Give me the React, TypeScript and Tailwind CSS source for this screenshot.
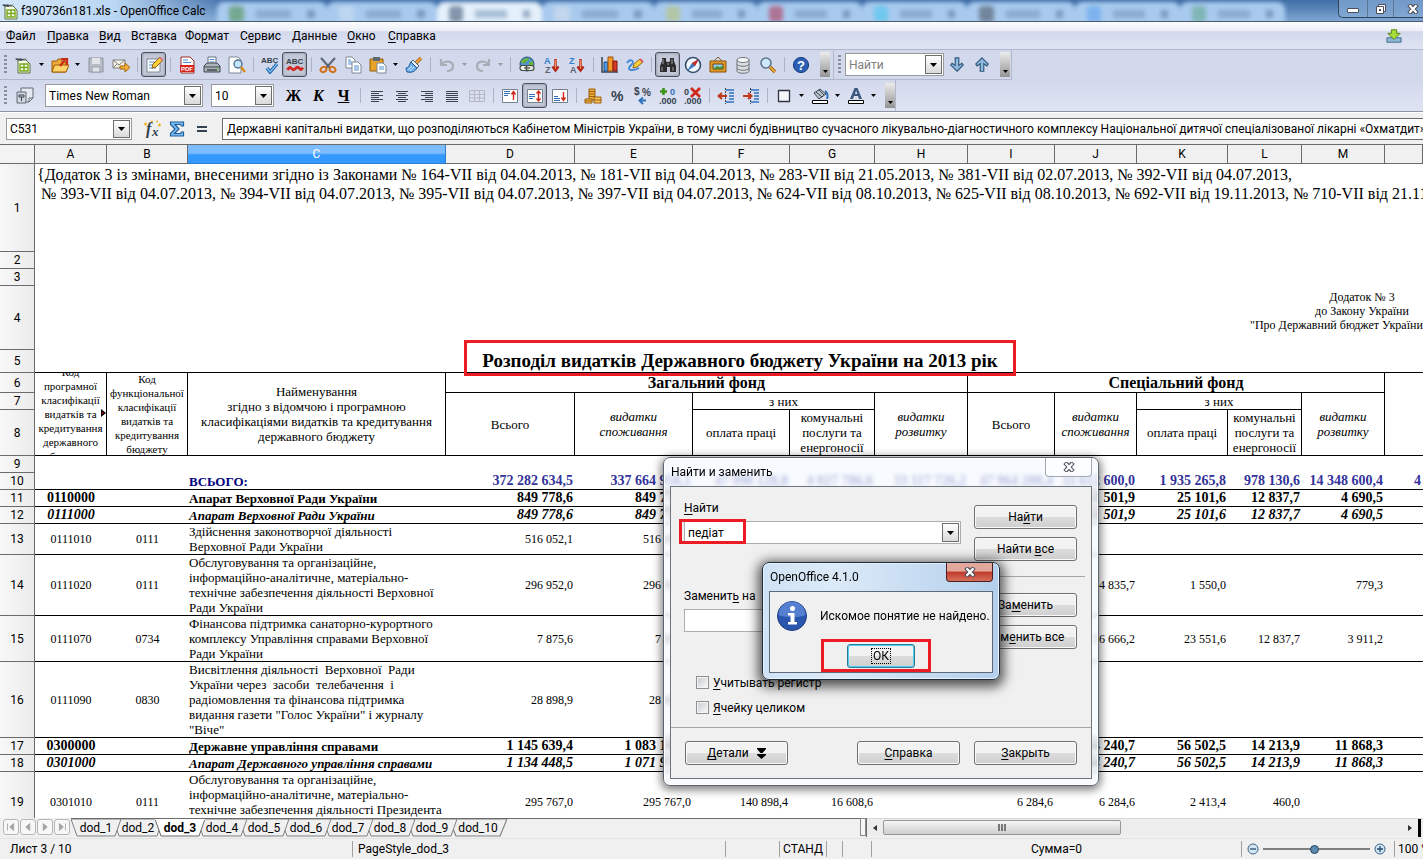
import React from "react";

/* ---------- small shared pieces ---------- */

function U({ t }: { t: string }) {
  const [a, b, c] = t.split("_");
  return (
    <span>
      {a}
      <span className="underline underline-offset-2">{b}</span>
      {c}
    </span>
  );
}

function Svg({ children, size = "h-[18px] w-[18px]" }: { children: React.ReactNode; size?: string }) {
  return (
    <svg viewBox="0 0 18 18" className={size + " shrink-0"} fill="none" aria-hidden="true">
      {children}
    </svg>
  );
}

function TB({ label, pressed, children }: { label: string; pressed?: boolean; children: React.ReactNode }) {
  return (
    <button
      aria-label={label}
      className={
        "flex h-[25px] w-[25px] shrink-0 items-center justify-center rounded-[3px] " +
        (pressed ? "border border-[#4d505c] bg-[#c3c8d8] shadow-[inset_0_0_2px_1px_#a3a7b6]" : "")
      }
    >
      {children}
    </button>
  );
}

function Drop({ label, dim }: { label: string; dim?: boolean }) {
  return (
    <button aria-label={label} className="flex h-[25px] w-[11px] shrink-0 items-center justify-center">
      <svg viewBox="0 0 5 3" className="h-[3px] w-[5px]" aria-hidden="true">
        <path d="M0 0h5L2.500 3z" fill={dim ? "#9a9a9a" : "#000"} />
      </svg>
    </button>
  );
}

function Sep() {
  return (
    <div className="flex w-2 shrink-0 justify-center">
      <div className="h-[15px] w-px bg-[#aeb3c4]" />
    </div>
  );
}

function Grip() {
  return <div className="ml-1 h-5 w-[3px] shrink-0 bg-[repeating-linear-gradient(to_bottom,#8b8f9c_0_2px,transparent_2px_4px)]" />;
}

function More() {
  return (
    <button
      aria-label="Ещё"
      className="flex h-[25px] w-[10px] shrink-0 items-end justify-center bg-gradient-to-b from-[#ececec] to-[#949494] pb-1"
    >
      <svg viewBox="0 0 5 3" className="h-[3px] w-[5px]" aria-hidden="true">
        <path d="M0 0h5L2.500 3z" fill="#000" />
      </svg>
    </button>
  );
}

function ArrowBox() {
  return (
    <span className="flex h-full w-[17px] shrink-0 items-center justify-center border border-[#6e6e6e] bg-gradient-to-b from-white to-[#d9d9d9]">
      <svg viewBox="0 0 7 4" className="h-1 w-[7px]" aria-hidden="true">
        <path d="M0 0h7L3.500 4z" fill="#000" />
      </svg>
    </span>
  );
}

function SelectBox({ label, value, width }: { label: string; value: string; width: string }) {
  return (
    <div className={"relative flex h-[23px] shrink-0 border border-[#9a9a9a] bg-white p-px " + width}>
      <select aria-label={label} defaultValue={value} className="w-full min-w-0 appearance-none bg-transparent pl-[2px] text-[12px] leading-4 outline-none">
        <option>{value}</option>
      </select>
      <div className="pointer-events-none absolute inset-y-px right-px flex">
        <ArrowBox />
      </div>
    </div>
  );
}

/* ---------- icons ---------- */

const DocCalc = () => (
  <Svg>
    <path d="M3 4h8l4 4v9H3z" fill="#fbfdf2" stroke="#57702f" />
    <path d="M5 8h8v7H5zM9 8v7M5 11.500h8" stroke="#76a818" strokeWidth="1.400" />
    <path d="M0 3c3-2 4 1 6-1 1 2 3 0 6 1-3 1-4 0-6 2-1-1-4 0-6-2z" fill="#3d4b57" />
  </Svg>
);
const IOpen = () => (
  <Svg>
    <path d="M1 5h5l1-2h4v3h4v10H1z" fill="#f0a93a" stroke="#9c5d09" />
    <path d="M3.500 9H18l-3 7H1z" fill="#ffd36b" stroke="#9c5d09" />
    <path d="M9 10l5-6M10 3h6v6" stroke="#c92b17" strokeWidth="2.200" />
  </Svg>
);
const ISave = () => (
  <Svg>
    <path d="M2 2h14v14H2z" fill="#b9bdc7" stroke="#8d919b" />
    <path d="M5 2h8v6H5z" fill="#e2e4ea" />
    <path d="M5 11h8v5H5z" fill="#e2e4ea" stroke="#9da1aa" />
  </Svg>
);
const IMail = () => (
  <Svg>
    <path d="M1 4h12v8H1z" fill="#f7f4ea" stroke="#7d7f7a" />
    <path d="M1 4l6 5 6-5M1 12l4-4" stroke="#7d7f7a" />
    <path d="M8 10h5V7l5 4.500L13 16v-3H8z" fill="#f5b13d" stroke="#a56308" />
  </Svg>
);
const IEdit = () => (
  <Svg>
    <path d="M2 3h13v13H2z" fill="#fff" stroke="#7b8896" />
    <path d="M4 6h6M4 9h4M4 12h7" stroke="#4f8ed0" />
    <path d="M7 12l1-4 7-7 3 3-7 7z" fill="#f9cf3b" stroke="#93610f" />
    <path d="M14 2l2-1 2 2-1 2z" fill="#e5748a" />
  </Svg>
);
const IPdf = () => (
  <Svg>
    <path d="M3 1h9l4 4v12H3z" fill="#fff" stroke="#9b2a22" />
    <path d="M5 4h5M5 6.500h8" stroke="#4f8ed0" />
    <rect x="2" y="9" width="14" height="7" fill="#d8231b" />
    <text x="3" y="15" fontSize="6" fontWeight="700" fill="#fff" fontFamily="Liberation Sans, sans-serif">PDF</text>
  </Svg>
);
const IPrint = () => (
  <Svg>
    <path d="M5 1h8v8H5z" fill="#fff" stroke="#63727f" />
    <path d="M6.500 3.500h5M6.500 6h5" stroke="#4f8ed0" />
    <path d="M1 10l3-3h10l3 3v6H1z" fill="#aab3ba" stroke="#3e474e" />
    <path d="M1 11h16" stroke="#3e474e" />
    <path d="M4 14h10" stroke="#3e474e" strokeWidth="1.500" />
    <path d="M13 13h2" stroke="#62c32a" />
  </Svg>
);
const IPreview = () => (
  <Svg>
    <path d="M1 1h9l3 3v13H1z" fill="#fff" stroke="#7b8896" />
    <circle cx="10" cy="8" r="4" fill="#c3e3fa" stroke="#55718b" strokeWidth="1.400" />
    <path d="M13 11l4 5" stroke="#d88d1a" strokeWidth="2.500" />
  </Svg>
);
const ISpell = () => (
  <Svg>
    <text x="0" y="7" fontSize="8" fontWeight="700" fill="#333f4a" fontFamily="Liberation Sans, sans-serif">ABC</text>
    <path d="M6 12l3 4 7-8" stroke="#1f5f9e" strokeWidth="3.400" />
    <path d="M6 12l3 4 7-8" stroke="#7dc2ff" strokeWidth="1.300" />
  </Svg>
);
const IAuto = () => (
  <Svg>
    <text x="0" y="8" fontSize="8" fontWeight="700" fill="#333f4a" fontFamily="Liberation Sans, sans-serif">ABC</text>
    <path d="M1.500 14q2-4 4-1.500t4 0 4 0 3-1" stroke="#d4261e" strokeWidth="2.800" />
  </Svg>
);
const ICut = () => (
  <Svg>
    <path d="M2 2l9 10M16 2L7 12" stroke="#5b6670" strokeWidth="2" />
    <ellipse cx="4.500" cy="13.500" rx="3" ry="2.500" stroke="#d3711a" strokeWidth="2" transform="rotate(-30 4.500 13.500)" />
    <ellipse cx="13.500" cy="13.500" rx="3" ry="2.500" stroke="#d3711a" strokeWidth="2" transform="rotate(30 13.500 13.500)" />
  </Svg>
);
const ICopy = () => (
  <Svg>
    <path d="M2 1h6l3 3v8H2z" fill="#fff" stroke="#7b8896" />
    <path d="M4 4h3M4 6h4M4 8h4" stroke="#4f8ed0" />
    <path d="M8 6h6l3 3v8H8z" fill="#fff" stroke="#7b8896" />
    <path d="M10 10h5M10 12h5M10 14h5" stroke="#4f8ed0" />
  </Svg>
);
const IPaste = () => (
  <Svg>
    <path d="M1 3h13v12H1z" fill="#e9a228" stroke="#8f5a0b" />
    <path d="M4 1h7v4H4z" fill="#5f6974" />
    <path d="M8 7h6l3 3v7H8z" fill="#fff" stroke="#7b8896" />
    <path d="M10 11h5M10 13h5" stroke="#4f8ed0" />
  </Svg>
);
const IBrush = () => (
  <Svg>
    <path d="M11 7l5-5" stroke="#b36a14" strokeWidth="3.400" />
    <path d="M11 7l5-5" stroke="#f3b14a" strokeWidth="1.400" />
    <path d="M8 4l6 6-3 3-6-6z" fill="#e8eef5" stroke="#44617f" />
    <path d="M6 6l6 6c-2 3-4 5-10 4-1-2-1-3-1-4 3 0 3-3 5-6z" fill="#69aef0" stroke="#22598f" />
    <path d="M3 14l4-4M5 15l4-4" stroke="#d9ecff" />
  </Svg>
);
const IUndo = () => (
  <Svg>
    <path d="M3 3v6h6M4 8c3-4 11-3 11 2 0 4-3 5-6 5" stroke="#a9adb8" strokeWidth="2.200" />
  </Svg>
);
const IRedo = () => (
  <Svg>
    <path d="M15 3v6H9M14 8C11 4 3 5 3 10c0 4 3 5 6 5" stroke="#a9adb8" strokeWidth="2.200" />
  </Svg>
);
const ILink = () => (
  <Svg>
    <circle cx="9" cy="8" r="7" fill="#4f92cf" stroke="#24527c" />
    <path d="M3 5c3-3 6-3 8-3 0 3-3 3-4 5-2 1-4 0-4-2zM11 6l4-1v5l-4 2z" fill="#6bb23a" />
    <rect x="2" y="9.500" width="8" height="5" rx="2.500" fill="#f2f4f0" stroke="#424b41" strokeWidth="1.200" />
    <rect x="8" y="9.500" width="8" height="5" rx="2.500" stroke="#424b41" strokeWidth="1.200" fill="#dfe4dd" />
    <path d="M6 12h6" stroke="#424b41" strokeWidth="1.200" />
  </Svg>
);
const Sort = ({ top, bottom }: { top: string; bottom: string }) => (
  <Svg>
    <text x="1" y="8" fontSize="9" fontWeight="700" fill="#2b7fd0" fontFamily="Liberation Sans, sans-serif">{top}</text>
    <text x="2" y="17" fontSize="9" fontWeight="700" fill="#5a6570" fontFamily="Liberation Sans, sans-serif">{bottom}</text>
    <path d="M12.500 3v11M9.500 10.500l3 4 3-4" stroke="#b3271b" strokeWidth="2.400" />
    <path d="M12.500 4v9" stroke="#f68b50" />
  </Svg>
);
const IChart = () => (
  <Svg>
    <path d="M1 1v15h16" stroke="#39444e" strokeWidth="1.500" />
    <path d="M3 6h4v9H3z" fill="#4f98e6" stroke="#1e4f86" />
    <path d="M7 1h5v14H7z" fill="#f79a2b" stroke="#9c4c09" />
    <path d="M12 5h4v10h-4z" fill="#d53a22" stroke="#7c1b0e" />
  </Svg>
);
const IDraw = () => (
  <Svg>
    <path d="M1 7c3-5 8-2 5 1s-5 6 0 6c3 0 4 0 7-2" stroke="#3f86d6" strokeWidth="1.800" />
    <path d="M7 12l1-4 6-5 3 3-6 5z" fill="#f9cf3b" stroke="#93610f" />
    <path d="M14 3l3 3" stroke="#e0576b" strokeWidth="2" />
  </Svg>
);
const IBino = () => (
  <Svg>
    <path d="M3 2h4v3l1 1h2l1-1V2h4v3l2 5v6h-6v-5H8v5H1v-6l2-5z" fill="#2d2d30" />
    <path d="M4 3v5M13 3v5M3 11v4M14 11v4M8 8h2" stroke="#9a9aa2" />
  </Svg>
);
const INav = () => (
  <Svg>
    <circle cx="9" cy="9" r="7.500" fill="#f2f7fc" stroke="#344f6b" strokeWidth="1.600" />
    <path d="M15 3l-4 7-8 5 5-8z" fill="#3878c4" />
    <path d="M15 3L8 7l3 3z" fill="#d42b1d" />
  </Svg>
);
const IGallery = () => (
  <Svg>
    <path d="M5 5l4-4 4 4" stroke="#7d5d1f" />
    <path d="M1 5h16v11H1z" fill="#dd9a29" stroke="#8a530b" />
    <path d="M4 8h10v5H4z" fill="#8fd0f2" stroke="#6c4410" />
    <path d="M4 13l4-3 3 1 3-1v3z" fill="#4d8d31" />
  </Svg>
);
const IData = () => (
  <Svg>
    <path d="M3 4v11c0 3 12 3 12 0V4z" fill="#dcdfe2" stroke="#6c747b" />
    <ellipse cx="9" cy="4" rx="6" ry="2.500" fill="#f6f7f8" stroke="#6c747b" />
    <path d="M3 8c0 3 12 3 12 0M3 12c0 3 12 3 12 0" stroke="#6c747b" />
  </Svg>
);
const IZoom = () => (
  <Svg>
    <circle cx="7" cy="7" r="5" fill="#cfe8fb" stroke="#5b7690" strokeWidth="1.600" />
    <path d="M11 11l5 5" stroke="#a5640d" strokeWidth="3.600" />
    <path d="M11 11l5 5" stroke="#f2b445" strokeWidth="1.600" />
  </Svg>
);
const IHelp = () => (
  <Svg>
    <circle cx="9" cy="9" r="7.600" fill="#2c5fb4" stroke="#173c80" />
    <text x="5" y="13.500" fontSize="13" fontWeight="700" fill="#fff" fontFamily="Liberation Sans, sans-serif">?</text>
  </Svg>
);
const FindArrow = ({ up }: { up?: boolean }) => (
  <Svg size="h-4 w-4">
    <path
      d={up ? "M9 1l7 7-1.500 2L11 7.500V16H7V7.500L3.500 10 2 8z" : "M9 16l7-7-1.500-2L11 9.500V1H7v8.500L3.500 7 2 9z"}
      fill="#8fbbe0"
      stroke="#31577b"
      strokeWidth="1.300"
    />
  </Svg>
);
const IStyles = () => (
  <Svg>
    <path d="M5 1h12v10l-4 4H5z" fill="#e7eaee" stroke="#5f6b76" />
    <path d="M13 15v-4h4" stroke="#5f6b76" />
    <path d="M1 5h9v11H1z" fill="#cfd6dd" stroke="#5f6b76" />
    <path d="M3 8h5v2H3zM5.500 10v4" stroke="#39444e" />
  </Svg>
);
const Lines = ({ d }: { d: string }) => (
  <Svg>
    <path d={d} stroke="#39444e" strokeWidth="1" />
  </Svg>
);
const IMerge = () => (
  <Svg>
    <path d="M1.500 3.500h15v11h-15zM1.500 7.500h15M1.500 11h15M6.500 3.500v11M11.500 3.500v11" stroke="#b4b8c4" />
  </Svg>
);
const VAlign = ({ lines, arrow }: { lines: string; arrow: string }) => (
  <Svg>
    <path d="M1.500 2.500h15v13h-15z" fill="#fff" stroke="#74808c" />
    <path d={lines} stroke="#2f73bd" />
    <path d={arrow} stroke="#d1281c" strokeWidth="1.400" />
  </Svg>
);
const ICoins = () => (
  <Svg>
    <path d="M5 2h6v11H5z" fill="#f0ae3c" stroke="#9a5d0a" />
    <path d="M5 4.500h6M5 7h6M5 9.500h6" stroke="#9a5d0a" />
    <path d="M1 12h7v4H1z" fill="#f6c25c" stroke="#9a5d0a" />
    <path d="M10 10h7v6h-7z" fill="#f6c25c" stroke="#9a5d0a" />
    <path d="M10 13h7M1 14h7" stroke="#9a5d0a" />
  </Svg>
);
const IPercent = () => (
  <Svg>
    <text x="2" y="14" fontSize="14" fontWeight="600" fill="#33414e" fontFamily="Liberation Sans, sans-serif">%</text>
  </Svg>
);
const IStd = () => (
  <Svg>
    <text x="0" y="8" fontSize="10" fontWeight="700" fill="#33414e" fontFamily="Liberation Sans, sans-serif">$</text>
    <text x="8" y="9" fontSize="10" fontWeight="700" fill="#33414e" fontFamily="Liberation Sans, sans-serif">%</text>
    <path d="M12 13.500H6M9 10.500l-3.500 3L9 17" stroke="#2f73bd" strokeWidth="2" />
  </Svg>
);
const IAddDec = () => (
  <Svg>
    <path d="M4.500 1v7M1 4.500h7" stroke="#3c9417" strokeWidth="2.600" />
    <text x="11" y="8" fontSize="9" fontWeight="700" fill="#2f73bd" fontFamily="Liberation Sans, sans-serif">0</text>
    <text x="0" y="17" fontSize="9" fontWeight="700" fill="#33414e" fontFamily="Liberation Sans, sans-serif">.000</text>
  </Svg>
);
const IDelDec = () => (
  <Svg>
    <text x="0" y="8" fontSize="9" fontWeight="700" fill="#33414e" fontFamily="Liberation Sans, sans-serif">0</text>
    <text x="0" y="17" fontSize="9" fontWeight="700" fill="#33414e" fontFamily="Liberation Sans, sans-serif">.000</text>
    <path d="M7 1l9 9M16 1L7 10" stroke="#d1281c" strokeWidth="2.800" />
  </Svg>
);
const Indent = ({ right }: { right?: boolean }) => (
  <Svg>
    <path d="M9 3h8M12 6h5M12 9h5M12 12h5M9 15h8" stroke="#2f73bd" strokeWidth="1.400" />
    <path d="M8.500 1v16" stroke="#39444e" strokeDasharray="2 1" />
    <path d={right ? "M1 9h8M6 6l3.500 3L6 12" : "M10 9H2M5 6L1.500 9 5 12"} stroke="#c23a1c" strokeWidth="2" />
  </Svg>
);
const IBorder = () => (
  <Svg>
    <path d="M3.500 3.500h11v11h-11z" fill="#f5f7fb" stroke="#2d3640" strokeWidth="1.300" />
  </Svg>
);
const IFill = () => (
  <Svg>
    <path d="M3 6l6-4 6 5-7 5z" fill="#b9c3cc" stroke="#39444e" />
    <path d="M5 5l6 5M8 3l5 5" stroke="#39444e" />
    <path d="M14 4c3 2 3 5 2 8" stroke="#2f73bd" strokeWidth="2" />
    <path d="M1.500 13.500h15v3h-15z" fill="#fff" stroke="#000" />
  </Svg>
);
const IFontColor = () => (
  <Svg>
    <path d="M3 12L7.500 1h3L15 12h-3l-1-3H7l-1 3zM8 7h2.500L9 3.500z" fill="#39597a" />
    <path d="M1.500 13.500h15v3h-15z" fill="#fff" stroke="#000" />
  </Svg>
);
const IFx = () => (
  <Svg>
    <text x="3" y="14" fontSize="16" fontStyle="italic" fontWeight="700" fill="#33414e" fontFamily="Liberation Serif, serif">f</text>
    <text x="9" y="16" fontSize="13" fontStyle="italic" fontWeight="700" fill="#33414e" fontFamily="Liberation Serif, serif">x</text>
    <path d="M1 4h3M2.500 2.500v3M8 1.500h2M13 1.500h2M15 5h3M16.500 3.500v3" stroke="#f0b323" strokeWidth="1.300" />
  </Svg>
);
const ISigma = () => (
  <Svg>
    <path d="M2.500 2h13v4h-2l-1-1.500H7L11 9l-4.500 4.500h6l1-1.500h2v4h-13v-2.500L7 9 2.500 4.500z" fill="#7cbcf0" stroke="#1f5f9e" strokeWidth="1.200" />
  </Svg>
);
const CrossX = () => (
  <svg viewBox="0 0 12 10" className="h-[10px] w-3" fill="none" aria-hidden="true">
    <path d="M2 0.500l8 9M10 0.500l-8 9" stroke="#4b4f5c" strokeWidth="4.400" />
    <path d="M2.500 1.200l7 7.600M9.500 1.200l-7 7.600" stroke="#fff" strokeWidth="2.200" />
  </svg>
);

/* ---------- sheet data ---------- */

const COLS = [
  ["A", "w-[72px]"],
  ["B", "w-[81px]"],
  ["C", "w-[258px]"],
  ["D", "w-[129px]"],
  ["E", "w-[118px]"],
  ["F", "w-[97px]"],
  ["G", "w-[85px]"],
  ["H", "w-[93px]"],
  ["I", "w-[87px]"],
  ["J", "w-[82px]"],
  ["K", "w-[91px]"],
  ["L", "w-[74px]"],
  ["M", "w-[83px]"],
  ["", ""],
];

type Row = {
  n: number;
  h: string;
  kind: "total" | "bold" | "italic" | "plain";
  a: string;
  b: string;
  c: string[];
  v: string[];
};

const ROWS: Row[] = [
  { n: 10, h: "h-[17px]", kind: "total", a: "", b: "", c: ["ВСЬОГО:"], v: ["372 282 634,5", "337 664 958,1", "47 998 128,8", "4 027 786,6", "33 117 726,2", "47 964 200,4", "33 612 600,0", "1 935 265,8", "978 130,6", "14 348 600,4", "4"] },
  { n: 11, h: "h-[17px]", kind: "bold", a: "0110000", b: "", c: ["Апарат Верховної Ради України"], v: ["849 778,6", "849 778,6", "", "", "", "", "61 501,9", "25 101,6", "12 837,7", "4 690,5", ""] },
  { n: 12, h: "h-[17px]", kind: "italic", a: "0111000", b: "", c: ["Апарат Верховної Ради України"], v: ["849 778,6", "849 778,6", "", "", "", "", "61 501,9", "25 101,6", "12 837,7", "4 690,5", ""] },
  { n: 13, h: "h-[31px]", kind: "plain", a: "0111010", b: "0111", c: ["Здійснення законотворчої діяльності", "Верховної Ради України"], v: ["516 052,1", "516 052,1", "", "", "", "", "", "", "", "", ""] },
  { n: 14, h: "h-[61px]", kind: "plain", a: "0111020", b: "0111", c: ["Обслуговування та організаційне,", "інформаційно-аналітичне, матеріально-", "технічне забезпечення діяльності Верховної", "Ради України"], v: ["296 952,0", "296 952,0", "", "", "", "", "4 835,7", "1 550,0", "", "779,3", ""] },
  { n: 15, h: "h-[46px]", kind: "plain", a: "0111070", b: "0734", c: ["Фінансова підтримка санаторно-курортного", "комплексу Управління справами Верховної", "Ради України"], v: ["7 875,6", "7 875,6", "", "", "", "", "56 666,2", "23 551,6", "12 837,7", "3 911,2", ""] },
  { n: 16, h: "h-[76px]", kind: "plain", a: "0111090", b: "0830", c: ["Висвітлення діяльності  Верховної  Ради", "України через  засоби  телебачення  і", "радіомовлення та фінансова підтримка", "видання газети \"Голос України\" і журналу", "\"Віче\""], v: ["28 898,9", "28 898,9", "", "", "", "", "", "", "", "", ""] },
  { n: 17, h: "h-[17px]", kind: "bold", a: "0300000", b: "", c: ["Державне управління справами"], v: ["1 145 639,4", "1 083 163,9", "", "", "", "", "84 240,7", "56 502,5", "14 213,9", "11 868,3", ""] },
  { n: 18, h: "h-[17px]", kind: "italic", a: "0301000", b: "", c: ["Апарат Державного управління справами"], v: ["1 134 448,5", "1 071 972,9", "", "", "", "", "84 240,7", "56 502,5", "14 213,9", "11 868,3", ""] },
  { n: 19, h: "h-[61px]", kind: "plain", a: "0301010", b: "0111", c: ["Обслуговування та організаційне,", "інформаційно-аналітичне, матеріально-", "технічне забезпечення діяльності Президента"], v: ["295 767,0", "295 767,0", "140 898,4", "16 608,6", "", "6 284,6", "6 284,6", "2 413,4", "460,0", "", ""] },
];

const KIND = {
  total: "text-[14px] font-bold text-[#333399]",
  bold: "text-[14px] font-bold",
  italic: "text-[14px] font-bold italic",
  plain: "text-[12px]",
};
const NAME_KIND = {
  total: "text-[13px] font-bold text-[#000080]",
  bold: "text-[13px] font-bold",
  italic: "text-[13px] font-bold italic",
  plain: "text-[13px]",
};

function RowHead({ n, h }: { n: number; h: string }) {
  return (
    <th
      scope="row"
      className={
        "border-b border-r border-[#6b6b6b] bg-gradient-to-r from-[#f8f8f8] to-[#ebebeb] p-0 text-center font-['Roboto',sans-serif] text-[12px] leading-4 font-normal " +
        h
      }
    >
      {n}
    </th>
  );
}

const HC = "border-b border-r border-black p-0 text-center";

function TwoLines({ a, b }: { a: string; b: string }) {
  return (
    <div className="text-[13px] leading-[15px] italic">
      {a}
      <br />
      {b}
    </div>
  );
}

function Utilities() {
  return (
    <div className="text-[13px] leading-[15px]">
      комунальні
      <br />
      послуги та
      <br />
      енергоносії
    </div>
  );
}

function Sheet() {
  return (
    <table className="w-full table-fixed border-separate border-spacing-0 font-['Liberation_Serif',serif]">
      <colgroup>
        <col className="w-[35px]" />
        {COLS.map(([c, w]) => (
          <col key={c} className={w} />
        ))}
      </colgroup>
      <thead>
        <tr>
          <th className="h-[19px] border-b border-r border-[#6b6b6b] bg-[#f3f3f3] p-0" />
          {COLS.map(([c]) => (
            <th
              key={c}
              scope="col"
              className={
                "h-[19px] border-b border-r p-0 text-center font-['Roboto',sans-serif] text-[12px] leading-4 font-normal " +
                (c === "C"
                  ? "border-[#2f7fd2] bg-[linear-gradient(to_bottom,#7cbcff_0_45%,#3399ff_55%_100%)] text-white"
                  : "border-[#6b6b6b] bg-[#f0f0f0]")
              }
            >
              {c}
            </th>
          ))}
        </tr>
      </thead>
      <tbody>
        <tr>
          <RowHead n={1} h="h-[88px]" />
          <td colSpan={14} className="overflow-hidden p-0 pt-px pl-[2px] align-top text-[16px] leading-[19px] whitespace-pre">
            <div>{"{Додаток 3 із змінами, внесеними згідно із Законами № 164-VII від 04.04.2013, № 181-VII від 04.04.2013, № 283-VII від 21.05.2013, № 381-VII від 02.07.2013, № 392-VII від 04.07.2013,"}</div>
            <div>{" № 393-VII від 04.07.2013, № 394-VII від 04.07.2013, № 395-VII від 04.07.2013, № 397-VII від 04.07.2013, № 624-VII від 08.10.2013, № 625-VII від 08.10.2013, № 692-VII від 19.11.2013, № 710-VII від 21.11.2013,"}</div>
          </td>
        </tr>
        <tr>
          <RowHead n={2} h="h-[17px]" />
          <td colSpan={14} />
        </tr>
        <tr>
          <RowHead n={3} h="h-[17px]" />
          <td colSpan={14} />
        </tr>
        <tr>
          <RowHead n={4} h="h-[64px]" />
          <td colSpan={11} />
          <td colSpan={3} className="overflow-hidden p-0 pt-1 pl-[22px] align-top">
            <div className="w-56 text-center text-[12px] leading-[14px] whitespace-nowrap">
              <div>Додаток № 3</div>
              <div>до Закону України</div>
              <div className="text-left">"Про Державний бюджет України на</div>
            </div>
          </td>
        </tr>
        <tr>
          <RowHead n={5} h="h-[23px]" />
          <td colSpan={14} className="border-b border-black p-0 pl-[22px] text-center text-[19px] leading-[22px] font-bold">
            <span className="relative inline-block h-[22px]">
              Розподіл видатків Державного бюджету України на 2013 рік
              <span className="pointer-events-none absolute -inset-x-[18px] -top-[10px] -bottom-1 border-[3px] border-[#ed1c24]" />
            </span>
          </td>
        </tr>
        <tr>
          <RowHead n={6} h="h-[20px]" />
          <td rowSpan={3} className={HC + " relative"}>
            <div className="flex h-[82px] flex-col items-center justify-center overflow-hidden text-[11px] leading-[14px] whitespace-pre">
              <div>{"Код\nпрограмної\nкласифікації\nвидатків та\nкредитування\nдержавного\nбюджету"}</div>
            </div>
            <svg viewBox="0 0 5 8" className="absolute top-9 right-0 h-2 w-[5px]" aria-hidden="true">
              <path d="M0 0l5 4-5 4z" fill="#000" />
              <path d="M1 3l2 1-2 1z" fill="#e00" />
            </svg>
          </td>
          <td rowSpan={3} className={HC}>
            <div className="flex h-[82px] flex-col items-center justify-center overflow-hidden text-[11px] leading-[14px] whitespace-pre">
              <div>{"Код\nфункціональної\nкласифікації\nвидатків та\nкредитування\nбюджету"}</div>
            </div>
          </td>
          <td rowSpan={3} className={HC + " text-[13px] leading-[15px] whitespace-pre"}>
            {"Найменування\nзгідно з відомчою і програмною\nкласифікаціями видатків та кредитування\nдержавного бюджету"}
          </td>
          <td colSpan={5} className={HC + " text-[16px] leading-[19px] font-bold"}>Загальний фонд</td>
          <td colSpan={5} className={HC + " text-[16px] leading-[19px] font-bold"}>Спеціальний фонд</td>
          <td rowSpan={3} className="border-b border-black" />
        </tr>
        <tr>
          <RowHead n={7} h="h-[17px]" />
          <td rowSpan={2} className={HC + " text-[13px] leading-[15px]"}>Всього</td>
          <td rowSpan={2} className={HC}><TwoLines a="видатки" b="споживання" /></td>
          <td colSpan={2} className={HC + " text-[13px] leading-[15px]"}>з них</td>
          <td rowSpan={2} className={HC}><TwoLines a="видатки" b="розвитку" /></td>
          <td rowSpan={2} className={HC + " text-[13px] leading-[15px]"}>Всього</td>
          <td rowSpan={2} className={HC}><TwoLines a="видатки" b="споживання" /></td>
          <td colSpan={2} className={HC + " text-[13px] leading-[15px]"}>з них</td>
          <td rowSpan={2} className={HC}><TwoLines a="видатки" b="розвитку" /></td>
        </tr>
        <tr>
          <RowHead n={8} h="h-[46px]" />
          <td className={HC + " text-[13px] leading-[15px]"}>оплата праці</td>
          <td className={HC}><Utilities /></td>
          <td className={HC + " text-[13px] leading-[15px]"}>оплата праці</td>
          <td className={HC}><Utilities /></td>
        </tr>
        <tr>
          <RowHead n={9} h="h-[17px]" />
          <td colSpan={14} />
        </tr>
        {ROWS.map((r) => (
          <tr key={r.n}>
            <RowHead n={r.n} h={r.h} />
            <td className={"border-b border-black p-0 text-center leading-4 " + KIND[r.kind]}>{r.a}</td>
            <td className={"border-b border-black p-0 text-center leading-4 " + KIND[r.kind]}>{r.b}</td>
            <td className={"border-b border-black p-0 pl-px leading-[15px] whitespace-pre " + NAME_KIND[r.kind]}>
              {r.c.map((l) => (
                <div key={l}>{l}</div>
              ))}
              {r.n === 19 && <div className="h-[15px]" />}
            </td>
            {r.v.map((v, i) => (
              <td key={i} className={"overflow-hidden border-b border-black p-0 pr-0.5 text-right leading-4 whitespace-nowrap " + KIND[r.kind]}>
                {v}
              </td>
            ))}
          </tr>
        ))}
      </tbody>
    </table>
  );
}

/* ---------- sheet tabs and status ---------- */

const TABS = ["dod_1", "dod_2", "dod_3", "dod_4", "dod_5", "dod_6", "dod_7", "dod_8", "dod_9", "dod_10"];
const TAB_Z = ["z-[10]", "z-[9]", "z-[20]", "z-[7]", "z-[6]", "z-[5]", "z-[4]", "z-[3]", "z-[2]", "z-[1]"];
const NAV = [
  ["Первый лист", "M4 4v8M11 4L6.500 8 11 12z"],
  ["Предыдущий лист", "M10 4L5.500 8 10 12z"],
  ["Следующий лист", "M6 4l4.500 4L6 12z"],
  ["Последний лист", "M12 4v8M5 4l4.500 4L5 12z"],
];

function TabBar() {
  return (
    <div className="flex h-[20px] shrink-0 items-start bg-[#f0f0f0]">
      <div className="flex w-[867px] shrink items-start border-r border-[#6b6b6b]">
        <div className="flex shrink-0 gap-px pt-px pr-px pl-[3px]">
          {NAV.map(([l, d]) => (
            <button key={l} aria-label={l} className="h-4 w-4 rounded-[3px] border border-[#b5b5b5] bg-[#f7f7f7]">
              <svg viewBox="0 0 16 16" className="h-[14px] w-[14px]" fill="#a5a5a5" stroke="#a5a5a5" aria-hidden="true">
                <path d={d} />
              </svg>
            </button>
          ))}
        </div>
        <div className="flex min-w-0 flex-1 border-t border-[#6b6b6b]">
          {TABS.map((t, i) => (
            <button
              key={t}
              className={
                "relative h-[18px] shrink-0 text-[12px] leading-[18px] " +
                TAB_Z[i] +
                (t === "dod_10" ? " -ml-2 w-[58px]" : i === 0 ? " w-[50px]" : " -ml-2 w-[50px]") +
                (t === "dod_3" ? " font-bold" : "")
              }
            >
              <svg viewBox="0 0 50 18" preserveAspectRatio="none" className="absolute inset-0 h-full w-full" aria-hidden="true">
                <path
                  d="M0 0l6 17h38l6-17z"
                  fill={t === "dod_3" ? "#fff" : "#f0f0f0"}
                  stroke={t === "dod_3" ? "#6b6b6b" : "#808080"}
                />
                {t === "dod_3" && <path d="M0 0h50" stroke="#fff" strokeWidth="2" />}
              </svg>
              <span className="relative">{t}</span>
            </button>
          ))}
        </div>
        <div className="h-[18px] w-1.5 border border-[#8a8a8a] bg-[#f7f7f7]" />
      </div>
      <div className="flex h-[18px] min-w-0 flex-1 items-center border-t border-[#d8d8d8] bg-[#ededed]">
        <button aria-label="Влево" className="flex w-4 justify-center">
          <svg viewBox="0 0 4 6" className="h-1.5 w-1" aria-hidden="true"><path d="M4 0L0 3l4 3z" fill="#333" /></svg>
        </button>
        <div className="flex h-[15px] w-[238px] items-center justify-center gap-px rounded-[2px] border border-[#979797] bg-gradient-to-b from-[#f5f5f5] to-[#cfcfd2]">
          <i className="h-[7px] w-0.5 bg-[#777]" />
          <i className="h-[7px] w-0.5 bg-[#777]" />
          <i className="h-[7px] w-0.5 bg-[#777]" />
        </div>
        <div className="flex-1" />
        <button aria-label="Вправо" className="mr-0.5 flex w-3 justify-center">
          <svg viewBox="0 0 4 6" className="h-1.5 w-1" aria-hidden="true"><path d="M0 0l4 3-4 3z" fill="#333" /></svg>
        </button>
        <div className="mr-0.5 h-[18px] w-[3px] bg-black" />
      </div>
    </div>
  );
}

function ZoomKnob({ label, plus }: { label: string; plus?: boolean }) {
  return (
    <button aria-label={label} className="shrink-0">
      <svg viewBox="0 0 12 12" className="h-3 w-3" fill="none" aria-hidden="true">
        <circle cx="6" cy="6" r="5" fill="#d3e6f5" stroke="#3f6384" />
        <path d={plus ? "M3 6h6M6 3v6" : "M3 6h6"} stroke="#264c70" strokeWidth="1.300" />
      </svg>
    </button>
  );
}

function StatusBar() {
  return (
    <div className="flex h-[21px] shrink-0 items-center overflow-hidden border-t border-[#e3e3e3] bg-[#f0f0f0] text-[12px] leading-4 whitespace-nowrap">
      <div className="w-[352px] shrink-0 pl-[10px]">Лист 3 / 10</div>
      <div className="h-4 w-[373px] min-w-0 border-l border-[#a0a0a0] pl-[5px]">PageStyle_dod_3</div>
      <div className="h-4 w-[54px] min-w-0 border-l border-[#a0a0a0]" />
      <div className="h-4 w-[47px] shrink-0 border-l border-[#a0a0a0] text-center">СТАНД</div>
      <div className="h-4 w-4 shrink-0 border-l border-[#a0a0a0]" />
      <div className="h-4 w-[29px] shrink-0 border-l border-[#a0a0a0]" />
      <div className="h-4 min-w-0 flex-1 border-l border-[#a0a0a0] text-center">Сумма=0</div>
      <div className="flex h-4 w-[153px] shrink-0 items-center gap-1 border-l border-[#a0a0a0] pl-[5px]">
        <ZoomKnob label="Уменьшить" />
        <input
          type="range"
          aria-label="Масштаб"
          defaultValue={48}
          className="h-3 w-[107px] appearance-none bg-[linear-gradient(#808080,#808080)] bg-[length:100%_2px] bg-center bg-no-repeat [&::-webkit-slider-thumb]:h-[9px] [&::-webkit-slider-thumb]:w-[9px] [&::-webkit-slider-thumb]:appearance-none [&::-webkit-slider-thumb]:rounded-full [&::-webkit-slider-thumb]:border [&::-webkit-slider-thumb]:border-[#24445f] [&::-webkit-slider-thumb]:bg-[#5d8bb0]"
        />
        <ZoomKnob label="Увеличить" plus />
      </div>
      <div className="h-4 w-[29px] shrink-0 border-l border-[#a0a0a0] pl-[3px]">100 %</div>
    </div>
  );
}

/* ---------- dialogs ---------- */

function DBtn({ t, children }: { t: string; children?: React.ReactNode }) {
  return (
    <button className="flex h-6 w-[103px] shrink-0 items-center justify-center gap-2 rounded-[3px] border border-[#707070] bg-[linear-gradient(to_bottom,#f2f2f2_0_48%,#dcdcdc_52%,#cfcfcf)] text-[12px] leading-4 shadow-[inset_0_0_0_1px_#fafafa]">
      <U t={t} />
      {children}
    </button>
  );
}

function Check({ id, t }: { id: string; t: string }) {
  return (
    <div className="flex h-[25px] items-center gap-1">
      <input id={id} type="checkbox" className="h-[13px] w-[13px] appearance-none border border-[#8e8f8f] bg-[linear-gradient(135deg,#c5c9cf,#fbfbfb)] shadow-[inset_0_0_0_1px_#f4f4f4]" />
      <label htmlFor={id}><U t={t} /></label>
    </div>
  );
}

function FindReplace() {
  return (
    <div
      role="dialog"
      aria-label="Найти и заменить"
      className="absolute top-[457px] left-[663px] z-30 flex h-[329px] w-[436px] flex-col rounded-[7px] border border-[#5c6470] bg-[#f4faff]/70 px-1.5 pb-1.5 text-[12px] leading-4 shadow-[0_2px_8px_2px_rgba(0,0,0,0.5),inset_0_0_0_1px_#fff] backdrop-blur-[2px]"
    >
      <div className="flex h-[28px] shrink-0 items-start justify-between">
        <span className="pt-1.5 pl-px">Найти и заменить</span>
        <button aria-label="Закрыть окно" className="flex h-[19px] w-[47px] items-center justify-center rounded-b-[4px] border border-t-0 border-[#a2a8b3] bg-white/60">
          <CrossX />
        </button>
      </div>
      <div className="flex min-h-0 flex-1 flex-col border border-[#70757d] bg-[#f0f0f0]">
        <div className="flex h-[241px] shrink-0 border-b border-[#a6a6a6] pr-[6px] pl-[13px]">
          <div className="flex w-[277px] flex-col">
            <label htmlFor="find" className="mt-[13px]"><U t="_Н_айти" /></label>
            <div className="relative mt-[5px] flex h-[23px] border border-[#abadb3] bg-white p-px">
              <input id="find" defaultValue="педіат" className="min-w-0 flex-1 bg-transparent pl-[2px] outline-none" />
              <button aria-label="Список поиска" className="flex"><ArrowBox /></button>
              <div className="pointer-events-none absolute -top-[3px] -left-[6px] h-[25px] w-[67px] border-[3px] border-[#ed1c24]" />
            </div>
            <label htmlFor="replace" className="mt-11"><U t="Заменит_ь_ на" /></label>
            <input id="replace" className="mt-[5px] h-[23px] border border-[#abadb3] bg-white px-1 outline-none" />
            <div className="mt-[38px] pl-3">
              <Check id="case" t="_У_читывать регистр" />
              <Check id="whole" t="_Я_чейку целиком" />
            </div>
          </div>
          <div className="ml-1.5 flex flex-1 flex-col pt-[18px] pl-[7px]">
            <DBtn t="На_й_ти" />
            <div className="h-2" />
            <DBtn t="Найти _в_се" />
            <div className="mt-[15px] mb-4 h-px bg-[#a6a6a6]" />
            <DBtn t="За_м_енить" />
            <div className="h-2" />
            <DBtn t="Зам_е_нить все" />
          </div>
        </div>
        <div className="flex pt-[13px] pl-[14px]">
          <DBtn t="_Д_етали">
            <svg viewBox="0 0 9 11" className="h-[11px] w-[9px]" aria-hidden="true">
              <path d="M0 0h9v1L5.500 5h-2L0 1zM0 6h9v1l-4.500 4L0 7z" fill="#000" />
            </svg>
          </DBtn>
          <div className="w-[69px]" />
          <DBtn t="_С_правка" />
          <div className="w-[14px]" />
          <DBtn t="_З_акрыть" />
        </div>
      </div>
    </div>
  );
}

function MessageBox() {
  return (
    <div
      role="alertdialog"
      aria-label="OpenOffice 4.1.0"
      className="absolute top-[562px] left-[762px] z-40 flex h-[118px] w-[238px] flex-col rounded-[7px] border border-[#1f2b3a] bg-[linear-gradient(to_right,#cfe2f5,#dceaf8_30%,#b3cfec)] px-1.5 pb-1.5 text-[12px] leading-4 shadow-[0_3px_12px_4px_rgba(0,0,0,0.65),inset_0_0_0_1px_#e9f3fc]"
    >
      <div className="flex h-[28px] shrink-0 items-start justify-between">
        <span className="pt-1.5 pl-px">OpenOffice 4.1.0</span>
        <button aria-label="Закрыть сообщение" className="flex h-[19px] w-[47px] items-center justify-center rounded-b-[4px] border border-t-0 border-[#4d1f1c] bg-[linear-gradient(to_bottom,#e3a79c_0_45%,#c0392a_50%,#d6705c)]">
          <CrossX />
        </button>
      </div>
      <div className="flex min-h-0 flex-1 flex-col border border-[#5c6a7a] bg-[#f0f0f0]">
        <div className="flex h-[48px] shrink-0 items-center gap-3 pl-[6px] whitespace-nowrap">
          <svg viewBox="0 0 32 32" className="h-8 w-8 shrink-0" aria-hidden="true">
            <circle cx="16" cy="16" r="14.500" fill="#2a57ad" stroke="#1b3c80" />
            <path d="M2.500 15a13.500 13.500 0 0127 0c-9 3-18 3-27 0z" fill="#5480cf" />
            <circle cx="16.500" cy="8.500" r="2.500" fill="#fff" />
            <path d="M12 13h6.500v9H21v2.500h-9V22h2.500v-6.500H12z" fill="#fff" />
          </svg>
          Искомое понятие не найдено.
        </div>
        <div className="-mt-px ml-[51px] flex h-[34px] w-[110px] items-center justify-center border-[3px] border-[#ed1c24] pl-[10px]">
          <button className="flex h-6 w-[68px] shrink-0 items-center justify-center rounded-[3px] border border-[#2b7b96] bg-[linear-gradient(to_bottom,#f2f2f2_0_48%,#dcdcdc_52%,#cfcfcf)] shadow-[inset_0_0_0_1px_#4fd0f0]">
            <span className="border border-dotted border-black px-px leading-[14px]">ОК</span>
          </button>
        </div>
      </div>
    </div>
  );
}

/* ---------- window top ---------- */

const BG_TABS = [
  ["bg-[#5f9a6a]", "w-[110px]"],
  ["bg-[#c8dcf0]", "w-[110px]"],
  ["bg-[#5a6f8a]", "w-[105px]"],
  ["bg-[#cfdcec]", "w-[112px]"],
  ["bg-[#b8c48a]", "w-[103px]"],
  ["bg-[#b0506e]", "w-[105px]"],
  ["bg-[#58c8ee]", "w-[105px]"],
  ["bg-[#5a6a78]", "w-[108px]"],
  ["bg-[#6aa8ee]", "w-[105px]"],
  ["bg-[#6fae9c]", "w-[105px]"],
];

function TitleBar() {
  return (
    <div className="relative flex h-[22px] shrink-0 items-center overflow-hidden border-b border-[#4a5a6c] bg-gradient-to-b from-[#3f6da6] to-[#7fa6d2]">
      <div className="absolute inset-0 flex pt-0.5 pl-[217px] blur-[2px]">
        {BG_TABS.map(([c, w], i) => (
          <div key={c} className={"flex h-6 shrink items-center rounded-t-lg px-3 " + w + (i === 2 ? " bg-[#e4f0fb]" : " bg-[#a8caee]")}>
            <span className={"h-4 w-4 rounded opacity-70 " + c} />
            <span className="ml-3 h-2 w-9 bg-[#6c8db4]/50" />
            <span className="ml-4 h-2 w-2 bg-[#4c6c94]/50" />
          </div>
        ))}
      </div>
      <div className="absolute top-0 left-0 h-[21px] w-[230px] bg-gradient-to-r from-[#d3e6f9] via-[#b9d6f3] to-transparent" />
      <div className="relative flex w-full items-center gap-px pl-[2px] text-[12px] leading-4">
        <DocCalc />
        <span>f390736n181.xls - OpenOffice Calc</span>
      </div>
      <div className="absolute top-0 right-0 flex h-[18px] rounded-bl-[5px] border-b border-l border-[#31455d] bg-[#87add6]/70">
        <button aria-label="Свернуть" className="flex w-[28px] items-center justify-center pt-1">
          <span className="h-[5px] w-3 rounded-[1px] border border-[#4b4f5c] bg-white" />
        </button>
        <button aria-label="Восстановить" className="flex w-[27px] items-center justify-center border-x border-[#5b7797]">
          <svg viewBox="0 0 12 12" className="h-3 w-3" fill="none" aria-hidden="true">
            <path d="M3.500 1.500h7v7h-7z" fill="#fff" stroke="#4b4f5c" />
            <path d="M1.500 3.500h7v7h-7z" fill="#fff" stroke="#4b4f5c" />
            <path d="M4 6h2v2H4z" fill="#4b4f5c" />
          </svg>
        </button>
        <button aria-label="Закрыть" className="flex w-[29px] items-center justify-end pr-1">
          <CrossX />
        </button>
      </div>
    </div>
  );
}

const MENU: [string, string][] = [
  ["_Ф_айл", "w-[41px]"],
  ["_П_равка", "w-[52px]"],
  ["_В_ид", "w-[32px]"],
  ["Вст_а_вка", "w-[54px]"],
  ["Фо_р_мат", "w-[55px]"],
  ["С_е_рвис", "w-[52px]"],
  ["_Д_анные", "w-[55px]"],
  ["_О_кно", "w-[41px]"],
  ["_С_правка", "w-[60px]"],
];

export default function App() {
  return (
    <div className="relative flex h-screen w-full flex-col overflow-hidden bg-[#f0f0f0] font-['Roboto',sans-serif] text-[12px] leading-4 text-black">
      <TitleBar />
      <div className="flex h-[27px] shrink-0 items-center bg-[linear-gradient(to_bottom,#fbfcfe,#eceff8_32%,#d3d9ec_36%,#dfe4f4)] pl-[6px]">
        {MENU.map(([t, w]) => (
          <button key={t} className={"shrink-0 text-left whitespace-nowrap " + w}>
            <U t={t} />
          </button>
        ))}
        <div className="flex-1" />
        <button aria-label="Загрузить обновление" className="mr-[21px]">
          <Svg size="h-4 w-4">
            <path d="M1 11h16v5H1z" fill="#8fb8d8" stroke="#3d6484" />
            <path d="M6 2h6v4h4l-7 7-7-7h4z" fill="#a5dc35" stroke="#4c7d0b" />
          </Svg>
        </button>
      </div>

      <div className="shrink-0 border-b border-[#8f94a3] bg-gradient-to-b from-[#d3d9ec] via-[#d3d9ec] to-[#dfe4f4]">
        <div className="flex h-[31px] border-t border-[#b1b8cc]">
          <div className="flex items-center border-r border-b border-[#b1b8cc] pr-[3px]">
            <Grip />
            <div className="w-1" />
            <TB label="Создать"><DocCalc /></TB>
            <Drop label="Создать: варианты" />
            <TB label="Открыть"><IOpen /></TB>
            <Drop label="Открыть: варианты" />
            <TB label="Сохранить"><ISave /></TB>
            <TB label="Отправить"><IMail /></TB>
            <Sep />
            <TB label="Правка" pressed><IEdit /></TB>
            <Sep />
            <TB label="Экспорт в PDF"><IPdf /></TB>
            <TB label="Печать"><IPrint /></TB>
            <TB label="Просмотр"><IPreview /></TB>
            <Sep />
            <TB label="Орфография"><ISpell /></TB>
            <TB label="Автопроверка" pressed><IAuto /></TB>
            <Sep />
            <TB label="Вырезать"><ICut /></TB>
            <TB label="Копировать"><ICopy /></TB>
            <TB label="Вставить"><IPaste /></TB>
            <Drop label="Вставить: варианты" />
            <TB label="Кисть"><IBrush /></TB>
            <Sep />
            <TB label="Отменить"><IUndo /></TB>
            <Drop label="Отменить: варианты" dim />
            <TB label="Вернуть"><IRedo /></TB>
            <Drop label="Вернуть: варианты" dim />
            <Sep />
            <TB label="Гиперссылка"><ILink /></TB>
            <TB label="По возрастанию"><Sort top="A" bottom="Z" /></TB>
            <TB label="По убыванию"><Sort top="Z" bottom="A" /></TB>
            <Sep />
            <TB label="Диаграмма"><IChart /></TB>
            <TB label="Рисунок"><IDraw /></TB>
            <Sep />
            <TB label="Найти и заменить" pressed><IBino /></TB>
            <TB label="Навигатор"><INav /></TB>
            <TB label="Галерея"><IGallery /></TB>
            <TB label="Источники данных"><IData /></TB>
            <TB label="Масштаб"><IZoom /></TB>
            <Sep />
            <TB label="Справка"><IHelp /></TB>
            <div className="w-[7px]" />
            <More />
          </div>
          <div className="flex items-center border-r border-b border-[#b1b8cc] pr-px">
            <Grip />
            <div className="ml-1 flex h-[23px] w-[99px] border border-[#9a9a9a] bg-white p-px">
              <input aria-label="Найти" placeholder="Найти" className="min-w-0 flex-1 bg-transparent pl-[2px] outline-none placeholder:text-[#808080]" />
              <button aria-label="Список" className="flex"><ArrowBox /></button>
            </div>
            <TB label="Найти далее"><FindArrow /></TB>
            <TB label="Найти ранее"><FindArrow up /></TB>
            <div className="w-[6px]" />
            <More />
          </div>
        </div>
        <div className="flex h-[31px]">
          <div className="flex items-center border-r border-[#b1b8cc]">
            <Grip />
            <div className="w-[5px]" />
            <TB label="Стили"><IStyles /></TB>
            <div className="w-2" />
            <SelectBox label="Шрифт" value="Times New Roman" width="w-[158px]" />
            <div className="w-2" />
            <SelectBox label="Размер" value="10" width="w-[63px]" />
            <div className="w-[7px]" />
            <button className="h-[25px] w-[25px] font-['Liberation_Serif',serif] text-[16px] font-bold">Ж</button>
            <button className="h-[25px] w-[25px] font-['Liberation_Serif',serif] text-[16px] font-bold italic">К</button>
            <button className="h-[25px] w-[25px] font-['Liberation_Serif',serif] text-[16px] font-bold underline">Ч</button>
            <Sep />
            <TB label="По левому краю"><Lines d="M3 4.500h12M3 6.500h8M3 8.500h12M3 10.500h8M3 12.500h12M3 14.500h8" /></TB>
            <TB label="По центру"><Lines d="M3 4.500h12M5 6.500h8M3 8.500h12M5 10.500h8M3 12.500h12M5 14.500h8" /></TB>
            <TB label="По правому краю"><Lines d="M3 4.500h12M7 6.500h8M3 8.500h12M7 10.500h8M3 12.500h12M7 14.500h8" /></TB>
            <TB label="По ширине"><Lines d="M3 4.500h12M3 6.500h12M3 8.500h12M3 10.500h12M3 12.500h12M3 14.500h12" /></TB>
            <TB label="Объединить"><IMerge /></TB>
            <Sep />
            <TB label="По верху"><VAlign lines="M3 4.500h6M3 6.500h6M3 8.500h4" arrow="M12.500 13V5M10.500 7.500l2-3 2 3" /></TB>
            <TB label="По середине" pressed><VAlign lines="M3 7.500h6M3 9.500h6M3 11.500h4" arrow="M12.500 4v10M10.500 6.500l2-2.500 2 2.500M10.500 11.500l2 2.500 2-2.500" /></TB>
            <TB label="По низу"><VAlign lines="M3 9.500h4M3 11.500h6M3 13.500h6" arrow="M12.500 5v8M10.500 10.500l2 3 2-3" /></TB>
            <Sep />
            <TB label="Денежный"><ICoins /></TB>
            <TB label="Процентный"><IPercent /></TB>
            <TB label="Стандартный"><IStd /></TB>
            <TB label="Добавить разряд"><IAddDec /></TB>
            <TB label="Удалить разряд"><IDelDec /></TB>
            <Sep />
            <TB label="Уменьшить отступ"><Indent /></TB>
            <TB label="Увеличить отступ"><Indent right /></TB>
            <Sep />
            <TB label="Обрамление"><IBorder /></TB>
            <Drop label="Обрамление: варианты" />
            <TB label="Цвет фона"><IFill /></TB>
            <Drop label="Цвет фона: варианты" />
            <TB label="Цвет шрифта"><IFontColor /></TB>
            <Drop label="Цвет шрифта: варианты" />
            <div className="w-[6px]" />
            <More />
          </div>
        </div>
      </div>

      <div className="flex h-[33px] shrink-0 items-center border-t border-white border-b border-b-[#6b6b6b] bg-[#f0f0f0] pl-[6px]">
        <div className="flex h-[22px] w-[126px] shrink-0 border border-[#9a9a9a] bg-white p-px">
          <input aria-label="Область листа" defaultValue="C531" className="min-w-0 flex-1 bg-transparent pl-[2px] outline-none" />
          <button aria-label="Имена" className="flex"><ArrowBox /></button>
        </div>
        <div className="w-[7px] shrink-0" />
        <TB label="Мастер функций"><IFx /></TB>
        <TB label="Сумма"><ISigma /></TB>
        <TB label="Функция"><Svg><path d="M4 7h10M4 11h10" stroke="#33414e" strokeWidth="2" /></Svg></TB>
        <input
          aria-label="Строка ввода"
          defaultValue="Державні капітальні видатки, що розподіляються Кабінетом Міністрів України, в тому числі будівництво сучасного лікувально-діагностичного комплексу Національної дитячої спеціалізованої лікарні «Охматдит», реконструкція"
          className="ml-2 h-[22px] min-w-0 flex-1 border border-r-0 border-[#6b6b6b] bg-white pl-1 outline-none"
        />
      </div>

      <div className="min-h-0 flex-1 overflow-hidden bg-white">
        <Sheet />
      </div>
      <TabBar />
      <StatusBar />
      <FindReplace />
      <MessageBox />
    </div>
  );
}
